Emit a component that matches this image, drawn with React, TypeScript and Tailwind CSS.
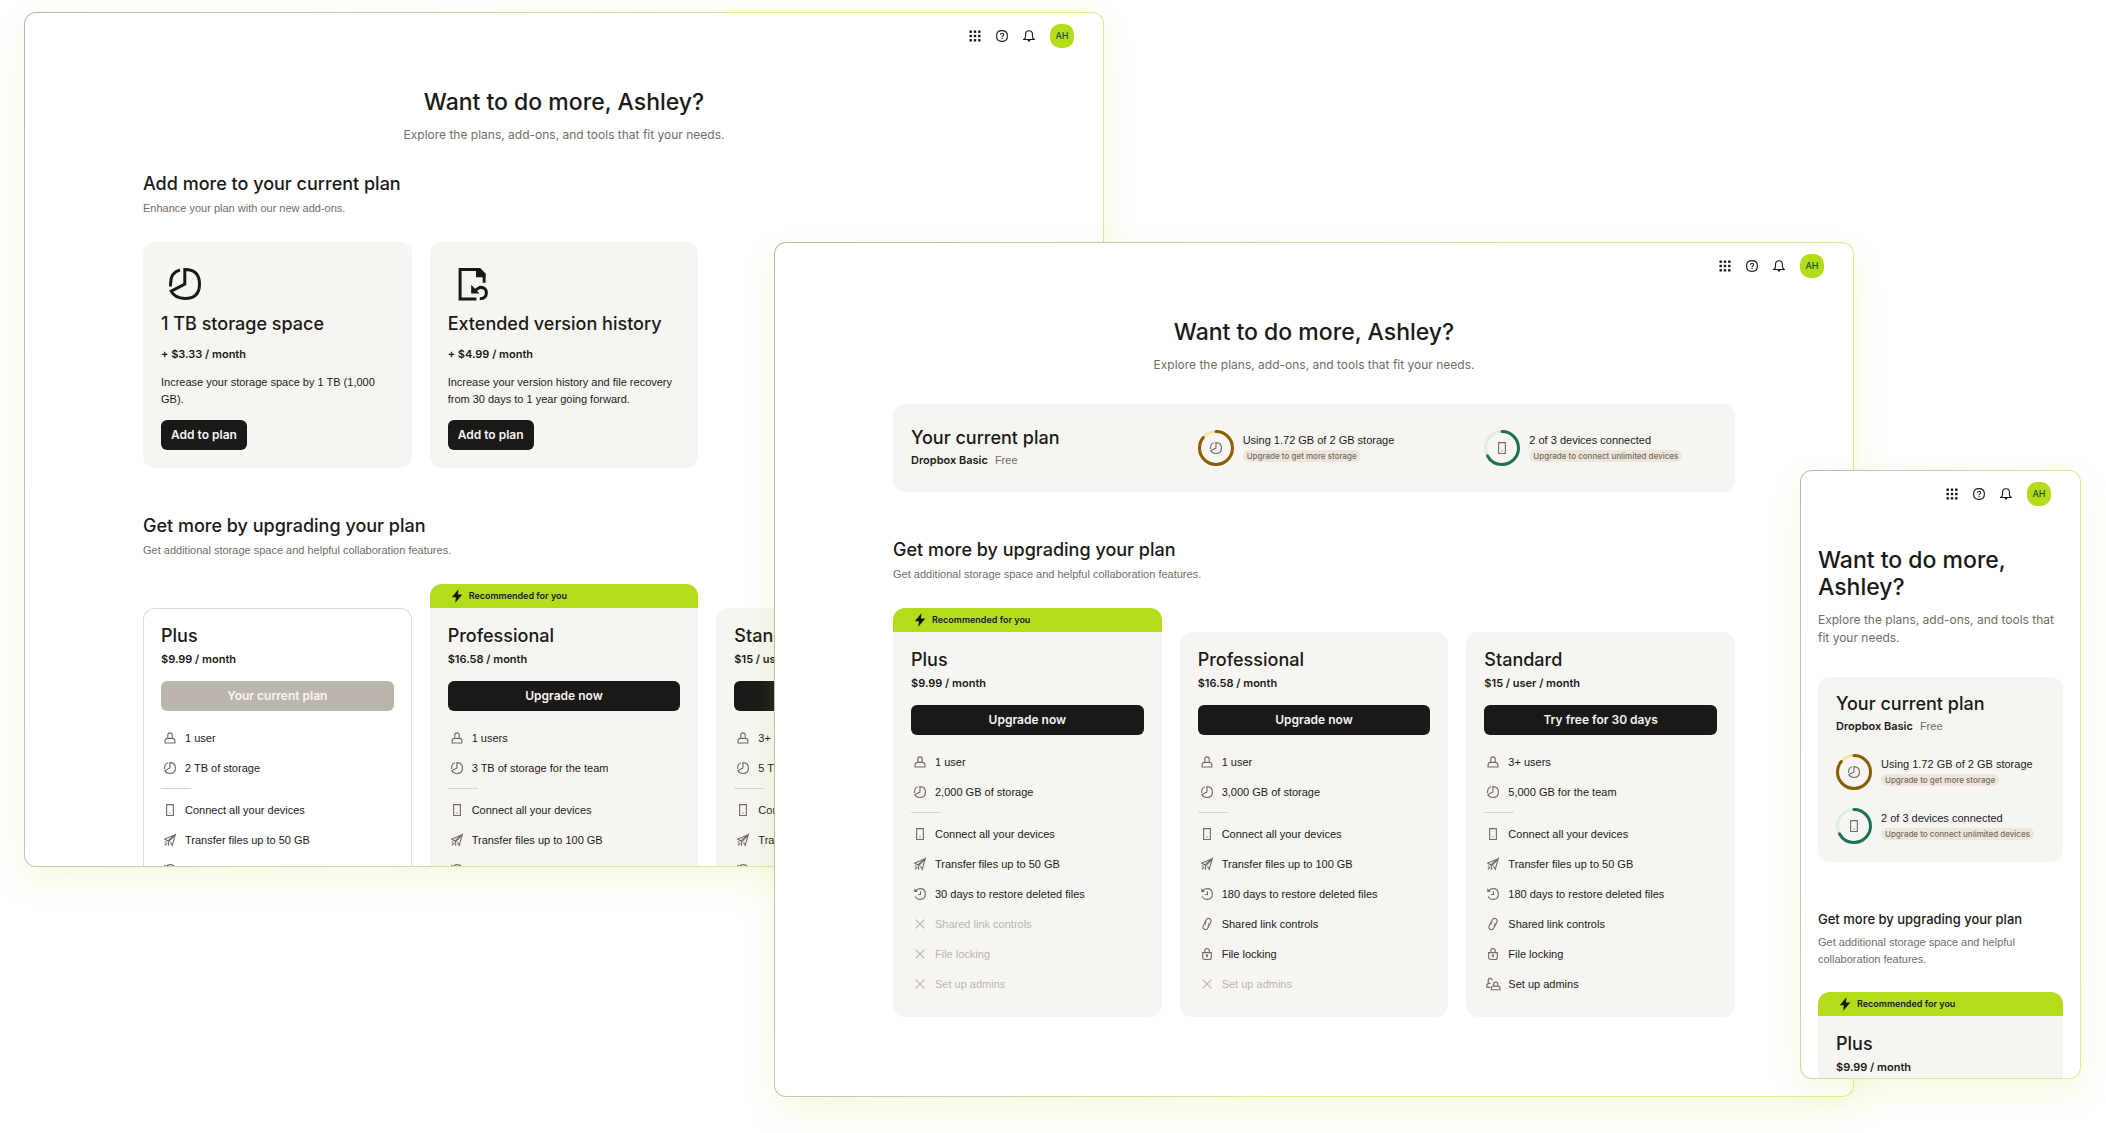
import type { ReactNode } from "react";

type IconName = "user" | "pie" | "device" | "plane" | "restore" | "link" | "lock" | "admins" | "cross";

const iconShapes: Record<IconName, ReactNode> = {
  user: (
    <>
      <path d="M9 12.5V8.800C9 6.500 10.200 5.200 12 5.200s3 1.300 3 3.600v3.700" />
      <path d="M5.400 18.600v-2.400c0-2.400 1.200-3.700 3.600-3.700h6c2.400 0 3.600 1.300 3.600 3.700v2.400z" />
    </>
  ),
  pie: (
    <>
      <path d="M11.9 4.75V12L5.1 15.6c1.2 2.4 3.5 3.65 6.9 3.65 4.9 0 7.25-2.3 7.25-7.25S16.9 4.75 11.9 4.75z" />
      <path d="M9.5 5C6.3 5.8 4.75 8 4.75 12v1.2" />
    </>
  ),
  device: (
    <>
      <path d="M7.500 4.750h9v14.500h-9z" />
      <path d="M11.2 15.200h1.600v1.600h-1.600z" fill="currentColor" stroke="none" />
    </>
  ),
  plane: (
    <>
      <path d="M19 5L5 10.8l4.2 2.6L19 5l-4 14.2-2.4-4.2" />
      <path d="M19 5l-9 9.5v3M5.2 19l3-3M9.2 19.6l1.8-1.8M5 15.4l1.6-1.2" />
    </>
  ),
  restore: (
    <>
      <path d="M6.200 8.200C7.500 5.900 9.500 4.900 12.200 4.900c4.600 0 6.900 2.500 6.900 7.100s-2.300 7.200-6.900 7.200c-3.400 0-5.600-1.300-6.600-4" />
      <path d="M12.600 8.400v4.200H9.400" />
      <path d="M4.300 4.300v5h5z" fill="currentColor" stroke="none" />
    </>
  ),
  link: (
    <>
      <path d="M9.800 13.200c-1-1.400-.7-2.800.1-4.400l1-2c1.100-2.100 2.800-2.800 4.700-1.900s2.400 2.800 1.300 5l-1.300 2.800c-.7 1.400-1.700 2-3 2" />
      <path d="M14.200 10.800c1 1.400.7 2.800-.1 4.400l-1 2c-1.100 2.100-2.800 2.800-4.700 1.900s-2.400-2.800-1.300-5l1.300-2.800c.7-1.400 1.700-2 3-2" />
    </>
  ),
  lock: (
    <>
      <path d="M6.200 10.200h11.600v6c0 2-1.100 3.100-3.100 3.100H9.300c-2 0-3.100-1.100-3.100-3.100z" />
      <path d="M9 10V7.600C9 5.600 10.100 4.600 12 4.600s3 1 3 3V10M12 13.500v3.200" />
      <path d="M10.500 12.700h3v2.200h-3z" fill="currentColor" stroke="none" />
    </>
  ),
  admins: (
    <>
      <path d="M5.600 11V7.400c0-1.800 1-2.900 2.700-2.900s2.700 1 2.700 2.700M3.700 16.300v-1.700c0-2.200 1.200-3.400 3.500-3.400h1.500M3.400 16.500h5" />
      <path d="M12.900 14.700v-2.500c0-1.800 1-2.700 2.700-2.700s2.700.9 2.700 2.700v2.500" />
      <path d="M9.800 19.700v-1.600c0-2.200 1.100-3.300 3.200-3.300h5.200c2.100 0 3.200 1.100 3.200 3.300v1.600z" />
    </>
  ),
  cross: <path d="M6.200 6.200l11.600 11.600M17.800 6.200L6.200 17.800" />,
};

function Icon({ name }: { name: IconName }) {
  return (
    <svg viewBox="0 0 24 24" aria-hidden="true" className="size-[18px] shrink-0 fill-none stroke-current" strokeWidth="1.5">
      {iconShapes[name]}
    </svg>
  );
}

function TopBar() {
  return (
    <header className="flex items-center justify-end gap-[15px] pt-[11px] pr-[29px] text-[#1a1918]">
      <button type="button" aria-label="Apps">
        <svg viewBox="0 0 12 12" className="size-3 fill-current">
          {[0.5, 4.8, 9.1].map((y) =>
            [0.5, 4.8, 9.1].map((x) => <rect key={`${x}-${y}`} x={x} y={y} width="2.4" height="2.4" />),
          )}
        </svg>
      </button>
      <button type="button" aria-label="Help">
        <svg viewBox="0 0 16 16" className="size-3 fill-none stroke-current" strokeWidth="1.5">
          <path d="M8 .8c4.900 0 7.200 2.300 7.200 7.200S12.900 15.200 8 15.200.8 12.900.8 8 3.100.8 8 .8z" />
          <path d="M6 6.400c0-1.300.7-2 2.100-2s2.100.7 2.100 1.800c0 1.700-2.100 1.500-2.100 3.300" />
          <path d="M7.300 10.600h1.600V12H7.300z" fill="currentColor" stroke="none" />
        </svg>
      </button>
      <button type="button" aria-label="Notifications">
        <svg viewBox="0 0 16 16" className="size-3 fill-none stroke-current" strokeWidth="1.5">
          <path d="M1 12.600c1.600-.9 2.400-2 2.400-3.800V6C3.400 2.700 5 1 8 1s4.600 1.700 4.600 5v2.800c0 1.800.8 2.900 2.400 3.800z" />
          <path d="M6 13h4l-.8 2.400H6.800z" fill="currentColor" stroke="none" />
        </svg>
      </button>
      <button
        type="button"
        aria-label="Account"
        className="flex size-6 items-center justify-center rounded-[10px] bg-[#b4dc19] text-[9px] leading-3 font-medium text-[#0f503c]"
      >
        AH
      </button>
    </header>
  );
}

function Intro({ centered }: { centered?: boolean }) {
  return (
    <div className={centered ? "mt-[41px] text-center" : "mt-[41px]"}>
      <h1 className="text-[23px] leading-[27px] font-medium">Want to do more, Ashley?</h1>
      <p className="mt-[10px] text-xs leading-[18px] text-[#736c64]">
        Explore the plans, add-ons, and tools that fit your needs.
      </p>
    </div>
  );
}

function SectionTitle({ title, text, small }: { title: string; text: string; small?: boolean }) {
  return (
    <div className={small ? "mb-6" : "mb-[25px]"}>
      <h2 className={small ? "text-[13px] leading-[22px] font-medium" : "text-lg leading-6 font-medium"}>{title}</h2>
      <p className="mt-1 font-['Liberation_Sans',sans-serif] text-[11px] leading-[17px] text-[#736c64]">{text}</p>
    </div>
  );
}

function AddOn({ icon, title, price, text }: { icon: ReactNode; title: string; price: string; text: string }) {
  return (
    <article className="rounded-xl bg-[#f7f5f2] p-[18px]">
      <svg viewBox="0 0 24 24" aria-hidden="true" className="size-12 fill-none stroke-current" strokeWidth="1.5">
        {icon}
      </svg>
      <h3 className="mt-1 text-lg leading-6 font-medium">{title}</h3>
      <p className="mt-[10px] text-[11px] leading-4 font-semibold">{price}</p>
      <p className="mt-3 font-['Liberation_Sans',sans-serif] text-[11px] leading-[17px]">{text}</p>
      <button
        type="button"
        className="mt-3 h-[30px] rounded-md bg-[#1a1918] px-[10px] text-xs font-semibold text-[#f7f5f2]"
      >
        Add to plan
      </button>
    </article>
  );
}

type Feature = [IconName, string];
type Plan = {
  name: string;
  price: string;
  action: string;
  current?: boolean;
  recommended?: boolean;
  size: Feature[];
  features: Feature[];
};

function FeatureRow({ feature: [icon, label] }: { feature: Feature }) {
  const off = icon === "cross";
  return (
    <li className={off ? "flex h-[30px] items-center gap-[6px] text-[#bbb5ae]" : "flex h-[30px] items-center gap-[6px]"}>
      <span className={off ? "" : "text-[#736c64]"}>
        <Icon name={icon} />
      </span>
      <span>{label}</span>
    </li>
  );
}

function PlanCard({ plan }: { plan: Plan }) {
  return (
    <article
      className={
        plan.current
          ? "overflow-hidden rounded-xl bg-white ring-1 ring-[#dfdcd8] ring-inset"
          : "overflow-hidden rounded-xl bg-[#f7f5f2]"
      }
    >
      {plan.recommended && (
        <p className="flex h-6 items-center gap-[3px] bg-[#b4dc19] px-[18px] text-[9px] font-semibold">
          <svg viewBox="0 0 18 18" aria-hidden="true" className="size-[18px] fill-current">
            <path d="M10.400 2.300L3.800 10.200h4l-.5 5.600 7-8.200h-4.300z" />
          </svg>
          Recommended for you
        </p>
      )}
      <div className="px-[18px] pt-4 pb-[18px]">
        <h3 className="text-lg leading-6 font-medium">{plan.name}</h3>
        <p className="mt-[3px] text-[11px] leading-4 font-semibold">{plan.price}</p>
        <button
          type="button"
          disabled={plan.current}
          className={
            plan.current
              ? "mt-[14px] h-[30px] w-full rounded-md bg-[#bbb5ae] text-xs font-semibold text-[#f7f5f2]"
              : "mt-[14px] h-[30px] w-full rounded-md bg-[#1a1918] text-xs font-semibold text-[#f7f5f2]"
          }
        >
          {plan.action}
        </button>
        <div className="mt-3 font-['Liberation_Sans',sans-serif] text-[11px] leading-4">
          <ul>
            {plan.size.map((f) => (
              <FeatureRow key={f[1]} feature={f} />
            ))}
          </ul>
          <hr className="mt-[5px] mb-[6px] w-[30px] border-[#d9d6d2]" />
          <ul>
            {plan.features.map((f) => (
              <FeatureRow key={f[1]} feature={f} />
            ))}
          </ul>
        </div>
      </div>
    </article>
  );
}

function Usage({ icon, share, track, bar, label, action }: {
  icon: IconName;
  share: number;
  track: string;
  bar: string;
  label: string;
  action: string;
}) {
  return (
    <div className="flex items-center gap-[9px]">
      <div className="grid size-9 shrink-0 place-items-center text-[#736c64]">
        <svg viewBox="0 0 36 36" aria-hidden="true" className="col-start-1 row-start-1 size-9 -rotate-90 fill-none" strokeWidth="3">
          <circle cx="18" cy="18" r="16.5" className={track} />
          <circle
            cx="18"
            cy="18"
            r="16.5"
            pathLength="100"
            strokeDasharray={`${share} 100`}
            strokeLinecap="round"
            className={bar}
          />
        </svg>
        <span className="col-start-1 row-start-1">
          <Icon name={icon} />
        </span>
      </div>
      <div>
        <p className="font-['Liberation_Sans',sans-serif] text-[11px] leading-[15px]">{label}</p>
        <a
          href="#plans"
          className="mt-[2px] mb-[2px] flex h-3 w-fit items-center rounded-full bg-[#eee6da] px-1 text-[8px] leading-3 font-medium text-[#736c64]"
        >
          {action}
        </a>
      </div>
    </div>
  );
}

function CurrentPlan({ stacked }: { stacked?: boolean }) {
  return (
    <section
      className={
        stacked
          ? "mt-[30px] flex flex-col gap-[18px] rounded-xl bg-[#f7f5f2] px-[18px] pt-[15px] pb-[18px]"
          : "mt-[30px] grid h-22 grid-cols-3 items-center gap-x-[54px] rounded-xl bg-[#f7f5f2] px-[18px]"
      }
    >
      <div className="pb-[2px]">
        <h2 className="text-lg leading-6 font-medium">Your current plan</h2>
        <p className="mt-[2px] flex gap-[7px] text-[11px] leading-4">
          <strong className="font-semibold">Dropbox Basic</strong>
          <span className="font-['Liberation_Sans',sans-serif] text-[#736c64]">Free</span>
        </p>
      </div>
      <Usage
        icon="pie"
        share={86}
        track="stroke-[#fbe3a8]"
        bar="stroke-[#895c08]"
        label="Using 1.72 GB of 2 GB storage"
        action="Upgrade to get more storage"
      />
      <Usage
        icon="device"
        share={67}
        track="stroke-[#e0ece8]"
        bar="stroke-[#1e6f54]"
        label="2 of 3 devices connected"
        action="Upgrade to connect unlimited devices"
      />
    </section>
  );
}

const upgradePlans: Plan[] = [
  {
    name: "Plus",
    price: "$9.99 / month",
    action: "Upgrade now",
    recommended: true,
    size: [["user", "1 user"], ["pie", "2,000 GB of storage"]],
    features: [
      ["device", "Connect all your devices"],
      ["plane", "Transfer files up to 50 GB"],
      ["restore", "30 days to restore deleted files"],
      ["cross", "Shared link controls"],
      ["cross", "File locking"],
      ["cross", "Set up admins"],
    ],
  },
  {
    name: "Professional",
    price: "$16.58 / month",
    action: "Upgrade now",
    size: [["user", "1 user"], ["pie", "3,000 GB of storage"]],
    features: [
      ["device", "Connect all your devices"],
      ["plane", "Transfer files up to 100 GB"],
      ["restore", "180 days to restore deleted files"],
      ["link", "Shared link controls"],
      ["lock", "File locking"],
      ["cross", "Set up admins"],
    ],
  },
  {
    name: "Standard",
    price: "$15 / user / month",
    action: "Try free for 30 days",
    size: [["user", "3+ users"], ["pie", "5,000 GB for the team"]],
    features: [
      ["device", "Connect all your devices"],
      ["plane", "Transfer files up to 50 GB"],
      ["restore", "180 days to restore deleted files"],
      ["link", "Shared link controls"],
      ["lock", "File locking"],
      ["admins", "Set up admins"],
    ],
  },
];

const memberPlans: Plan[] = [
  {
    ...upgradePlans[0],
    action: "Your current plan",
    current: true,
    recommended: false,
    size: [["user", "1 user"], ["pie", "2 TB of storage"]],
    features: upgradePlans[0].features.slice(0, 3),
  },
  {
    ...upgradePlans[1],
    recommended: true,
    size: [["user", "1 users"], ["pie", "3 TB of storage for the team"]],
    features: upgradePlans[1].features.slice(0, 3),
  },
  {
    ...upgradePlans[2],
    size: [["user", "3+ users"], ["pie", "5 TB of storage for the team"]],
    features: upgradePlans[2].features.slice(0, 3),
  },
];

function Plans({ plans, small }: { plans: Plan[]; small?: boolean }) {
  return (
    <section className="mt-[46px]">
      <SectionTitle
        small={small}
        title="Get more by upgrading your plan"
        text="Get additional storage space and helpful collaboration features."
      />
      <div className={small ? "flex flex-col gap-[18px]" : "grid grid-cols-3 items-end gap-[18px]"}>
        {plans.map((plan) => (
          <PlanCard key={plan.name} plan={plan} />
        ))}
      </div>
    </section>
  );
}

function Window({ place, children }: { place: string; children: ReactNode }) {
  return (
    <div
      className={`absolute overflow-hidden rounded-xl border border-transparent shadow-[0_14px_36px_rgba(180,220,25,0.12),0_2px_20px_rgba(180,220,25,0.04)] [background:linear-gradient(white,white)_padding-box,linear-gradient(105deg,#bbb5ae_0%,#c6c3ba_22%,#dde98f_55%,#dcee8e_100%)_border-box] ${place}`}
    >
      <TopBar />
      {children}
    </div>
  );
}

export default function App() {
  return (
    <main className="relative min-h-screen overflow-hidden bg-white font-['Inter',sans-serif] text-[#1a1918]">
      <Window place="top-3 left-6 h-[855px] w-[1080px]">
        <div className="px-[118px]">
          <Intro centered />
          <section className="mt-7">
            <SectionTitle title="Add more to your current plan" text="Enhance your plan with our new add-ons." />
            <div className="grid grid-cols-3 gap-[18px]">
              <AddOn
                icon={iconShapes.pie}
                title="1 TB storage space"
                price="+ $3.33 / month"
                text="Increase your storage space by 1 TB (1,000 GB)."
              />
              <AddOn
                icon={
                  <>
                    <path d="M14.200 19.450H6.050V4.750H15.700L18.050 7.200V11.400" />
                    <path d="M14 4.200h2.200L18.700 6.700V8.600H14z" fill="currentColor" stroke="none" />
                    <path d="M13 15.800l1.700-1.400c2-1.600 4.500-.2 4.500 1.900 0 2-1.300 3.100-3.300 3.100" />
                    <path d="M11.600 12.400v4.300h4.200z" fill="currentColor" stroke="none" />
                  </>
                }
                title="Extended version history"
                price="+ $4.99 / month"
                text="Increase your version history and file recovery from 30 days to 1 year going forward."
              />
            </div>
          </section>
          <Plans plans={memberPlans} />
        </div>
      </Window>

      <Window place="top-[242px] left-[774px] h-[855px] w-[1080px]">
        <div className="px-[118px]">
          <Intro centered />
          <CurrentPlan />
          <Plans plans={upgradePlans} />
        </div>
      </Window>

      <Window place="top-[470px] left-[1800px] h-[609px] w-[281px]">
        <div className="px-[17px]">
          <Intro />
          <CurrentPlan stacked />
          <Plans plans={upgradePlans.slice(0, 1)} small />
        </div>
      </Window>
    </main>
  );
}
